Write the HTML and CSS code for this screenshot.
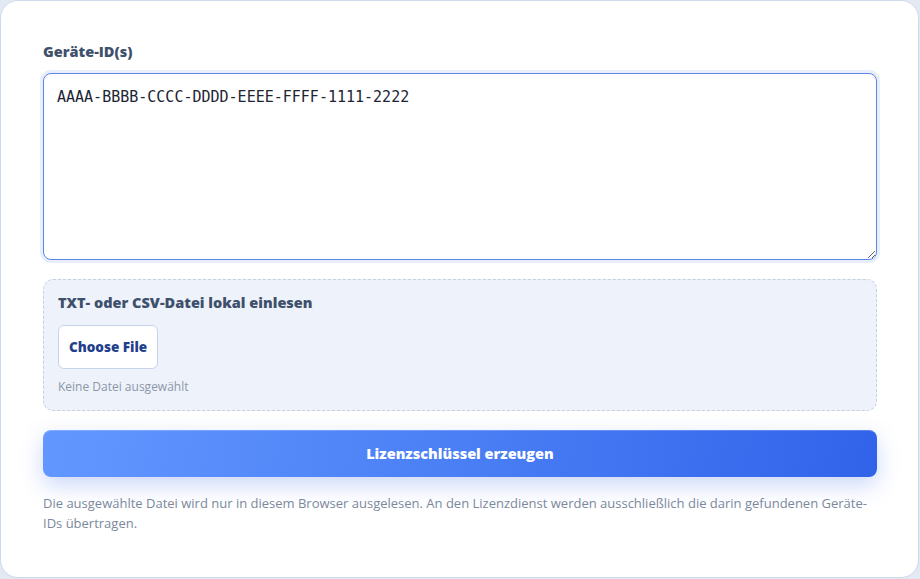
FILE: index.html
```html
<!DOCTYPE html>
<html lang="de">
<head>
<meta charset="utf-8">
<title>Lizenzschlüssel</title>
<link rel="stylesheet" href="styles.css">
</head>
<body>
<div class="card">
  <label class="field-label" for="ids">Geräte-ID(s)</label>
  <textarea id="ids" class="ids">AAAA-BBBB-CCCC-DDDD-EEEE-FFFF-1111-2222</textarea>
  <div class="upload">
    <div class="upload-title">TXT- oder CSV-Datei lokal einlesen</div>
    <button class="file-btn" type="button">Choose File</button>
    <div class="file-status">Keine Datei ausgewählt</div>
  </div>
  <button class="primary" type="button">Lizenzschlüssel erzeugen</button>
  <p class="note">Die ausgewählte Datei wird nur in diesem Browser ausgelesen. An den Lizenzdienst werden ausschließlich die darin gefundenen Geräte-IDs übertragen.</p>
</div>
</body>
</html>
```
FILE: styles.css
```css
html, body {
  margin: 0;
  padding: 0;
  background: #e3e9f2;
}
body {
  font-family: "Open Sans", "Noto Sans", sans-serif;
  width: 920px;
  height: 579px;
}
.card {
  box-sizing: border-box;
  width: 919px;
  height: 578px;
  background: #ffffff;
  border: 1px solid #cfdaea;
  border-radius: 18px;
  padding: 41px 41px 0 42px;
  display: flex;
  flex-direction: column;
}
.field-label {
  display: block;
  font-weight: 800;
  font-size: 14.5px;
  line-height: 20px;
  color: #3e506c;
  margin-bottom: 11px;
}
.ids {
  box-sizing: border-box;
  width: 834px;
  height: 187px;
  border: 1px solid #5b85e6;
  border-radius: 8px;
  box-shadow: 0 0 0 3px rgba(91, 133, 230, 0.14);
  padding: 12px 13px;
  font-family: "DejaVu Sans Mono", monospace;
  font-size: 15px;
  line-height: 22px;
  color: #1d2533;
  outline: none;
  resize: vertical;
  margin: 0 0 19px 0;
  background: #fff;
}
.upload {
  box-sizing: border-box;
  width: 834px;
  height: 132px;
  background: #eef2fa;
  border: 1px dashed #c4cfdf;
  border-radius: 10px;
  padding: 13px 14px 0;
  display: flex;
  flex-direction: column;
  align-items: flex-start;
}
.upload-title {
  font-weight: 800;
  font-size: 14.5px;
  line-height: 20px;
  color: #3e506c;
}
.file-btn {
  margin-top: 12px;
  width: 100px;
  height: 44px;
  background: #ffffff;
  border: 1px solid #c6d3e8;
  border-radius: 6px;
  font-family: "Open Sans", sans-serif;
  font-weight: 800;
  font-size: 13.5px;
  color: #1f3f8c;
  padding: 0;
}
.file-status {
  margin-top: 10px;
  font-size: 12px;
  line-height: 16px;
  color: #8c97a8;
}
.primary {
  margin-top: 19px;
  width: 834px;
  height: 47px;
  border: none;
  border-radius: 8px;
  background: linear-gradient(100deg, #6397ff 0%, #4a7ff5 50%, #3163ea 100%);
  box-shadow: 0 8px 22px rgba(70, 110, 235, 0.28), inset 0 1px 0 rgba(255, 255, 255, 0.2);
  color: #ffffff;
  font-family: "Open Sans", sans-serif;
  font-weight: 800;
  font-size: 14.5px;
  padding: 0;
}
.note {
  margin: 16px 0 0;
  font-size: 13px;
  line-height: 20px;
  color: #7b889c;
}
```
